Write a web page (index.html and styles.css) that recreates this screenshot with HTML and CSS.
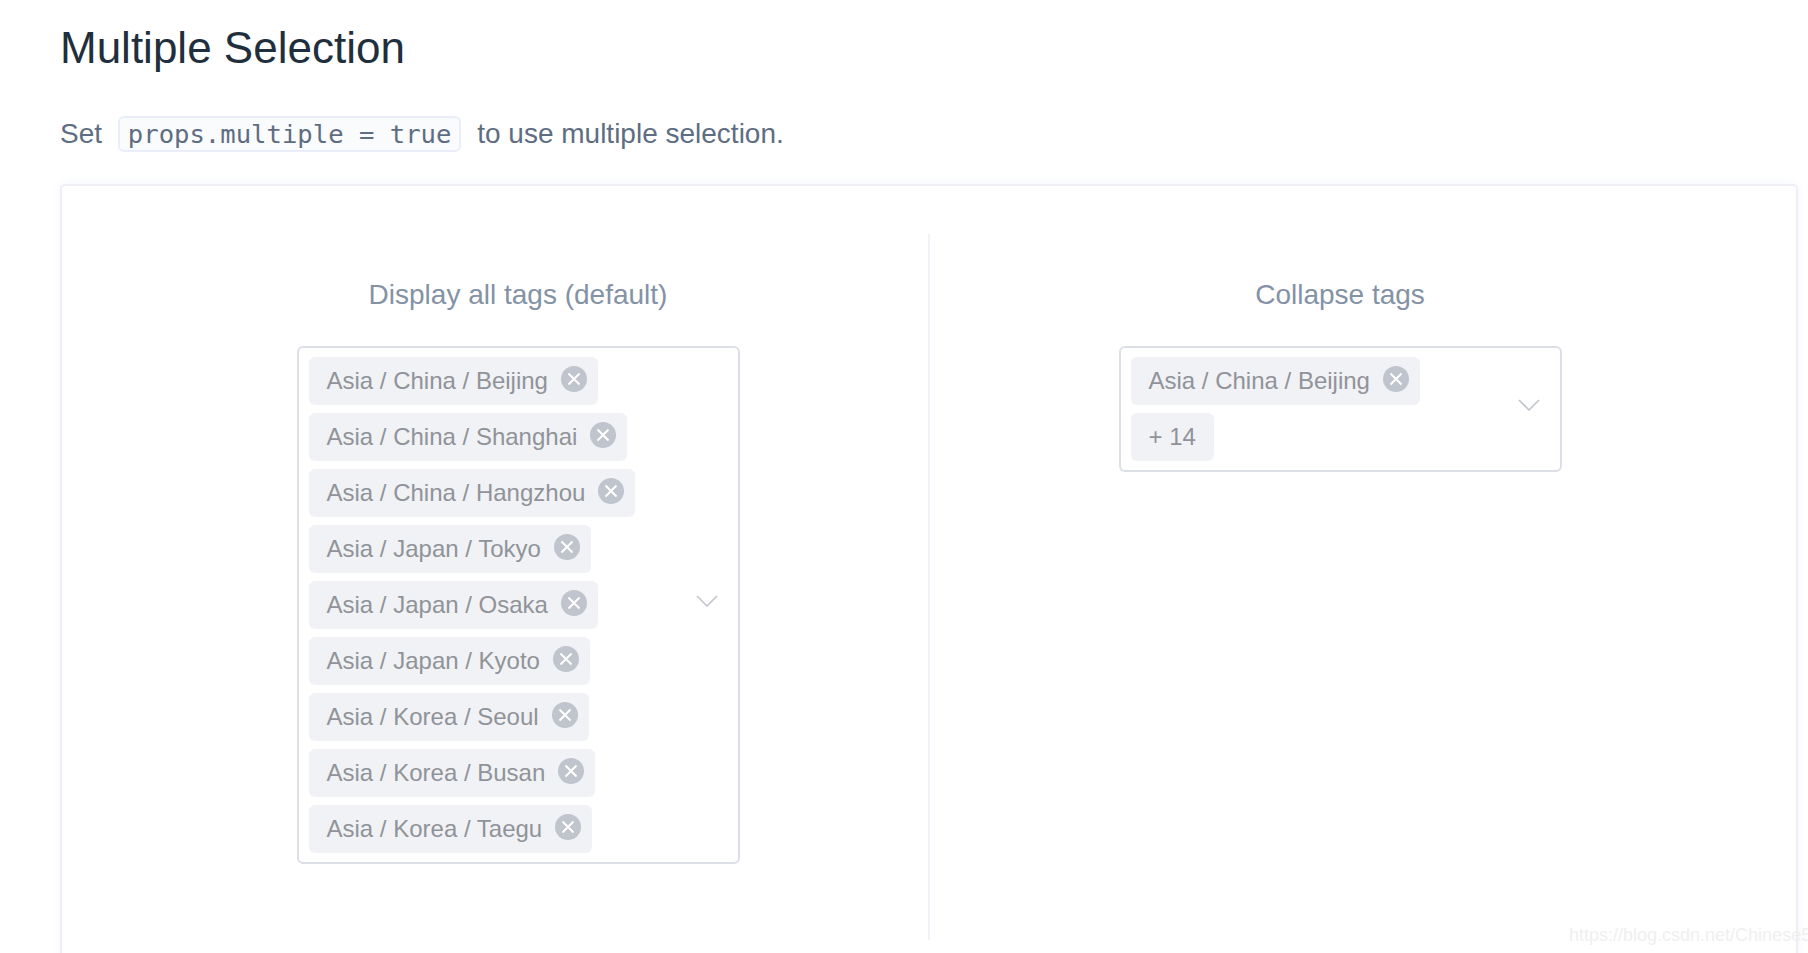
FILE: index.html
```html
<!DOCTYPE html>
<html lang="en">
<head>
<meta charset="utf-8">
<title>Multiple Selection</title>
<link rel="stylesheet" href="styles.css">
</head>
<body>
<main class="page">
  <h3 class="title">Multiple Selection</h3>
  <p class="intro">Set <code class="code">props.multiple = true</code> to use multiple selection.</p>
  <section class="card">
    <div class="demo demo-left">
      <span class="label">Display all tags (default)</span>
      <div class="select">
        <div class="tags">
          <span class="tag">Asia / China / Beijing<svg class="close" viewBox="0 0 26 26"><circle cx="13" cy="13" r="13"/><path d="M7.5 7.5l11 11M18.500 7.500l-11 11"/></svg></span>
          <span class="tag">Asia / China / Shanghai<svg class="close" viewBox="0 0 26 26"><circle cx="13" cy="13" r="13"/><path d="M7.500 7.500l11 11M18.500 7.500l-11 11"/></svg></span>
          <span class="tag">Asia / China / Hangzhou<svg class="close" viewBox="0 0 26 26"><circle cx="13" cy="13" r="13"/><path d="M7.500 7.500l11 11M18.500 7.500l-11 11"/></svg></span>
          <span class="tag">Asia / Japan / Tokyo<svg class="close" viewBox="0 0 26 26"><circle cx="13" cy="13" r="13"/><path d="M7.500 7.500l11 11M18.500 7.500l-11 11"/></svg></span>
          <span class="tag">Asia / Japan / Osaka<svg class="close" viewBox="0 0 26 26"><circle cx="13" cy="13" r="13"/><path d="M7.500 7.500l11 11M18.500 7.500l-11 11"/></svg></span>
          <span class="tag">Asia / Japan / Kyoto<svg class="close" viewBox="0 0 26 26"><circle cx="13" cy="13" r="13"/><path d="M7.500 7.500l11 11M18.500 7.500l-11 11"/></svg></span>
          <span class="tag">Asia / Korea / Seoul<svg class="close" viewBox="0 0 26 26"><circle cx="13" cy="13" r="13"/><path d="M7.500 7.500l11 11M18.500 7.500l-11 11"/></svg></span>
          <span class="tag">Asia / Korea / Busan<svg class="close" viewBox="0 0 26 26"><circle cx="13" cy="13" r="13"/><path d="M7.500 7.500l11 11M18.500 7.500l-11 11"/></svg></span>
          <span class="tag">Asia / Korea / Taegu<svg class="close" viewBox="0 0 26 26"><circle cx="13" cy="13" r="13"/><path d="M7.500 7.500l11 11M18.500 7.500l-11 11"/></svg></span>
        </div>
        <svg class="chevron" viewBox="0 0 22 12"><path d="M1 1l10 10L21 1"/></svg>
      </div>
    </div>
    <div class="demo">
      <span class="label">Collapse tags</span>
      <div class="select">
        <div class="tags">
          <span class="tag">Asia / China / Beijing<svg class="close" viewBox="0 0 26 26"><circle cx="13" cy="13" r="13"/><path d="M7.500 7.500l11 11M18.500 7.500l-11 11"/></svg></span>
          <span class="tag">+ 14</span>
        </div>
        <svg class="chevron" viewBox="0 0 22 12"><path d="M1 1l10 10L21 1"/></svg>
      </div>
    </div>
  </section>
  <span class="watermark">https://blog.csdn.net/Chinese521</span>
</main>
</body>
</html>
```
FILE: styles.css
```css
html, body {
  margin: 0;
  height: 953px;
  overflow: hidden;
  background: #fff;
}
.page {
  position: relative;
  height: 953px;
  padding: 0 10px 0 60px;
  box-sizing: border-box;
  font-family: "Liberation Sans", Arial, sans-serif;
}
.title {
  margin: 0;
  padding-top: 22px;
  font-size: 44px;
  line-height: 52px;
  font-weight: 400;
  color: #1f2f3d;
}
.intro {
  margin: 42px 0 0;
  height: 36px;
  display: flex;
  align-items: center;
  gap: 8px;
  font-size: 28px;
  color: #5e6d82;
  white-space: pre;
}
.code {
  box-sizing: border-box;
  height: 36px;
  padding: 0 8px;
  display: flex;
  align-items: center;
  font-family: "DejaVu Sans Mono", monospace;
  font-size: 25.6px;
  color: #5e6d82;
  background: #fafbfd;
  border: 2px solid #eaeefb;
  border-radius: 6px;
}
.card {
  box-sizing: border-box;
  margin-top: 32px;
  height: 806px;
  padding: 48px 46px;
  display: flex;
  align-items: stretch;
  border: 2px solid #ebebeb;
  border-color: #eeeff4;
  border-radius: 5px;
  box-shadow: 0 0 8px rgba(232, 237, 250, .5);
}
.demo {
  flex: 1 1 0;
  padding-top: 44px;
  display: flex;
  flex-direction: column;
  align-items: center;
}
.demo-left {
  border-right: 2px solid #eff2f6;
}
.label {
  height: 34px;
  line-height: 34px;
  font-size: 28px;
  color: #8492a6;
}
.select {
  box-sizing: border-box;
  width: 443px;
  margin-top: 34px;
  padding: 9px 20px 9px 10px;
  display: flex;
  justify-content: space-between;
  align-items: center;
  border: 2px solid #dcdfe6;
  border-radius: 6px;
}
.tags {
  display: flex;
  flex-direction: column;
  align-items: flex-start;
  gap: 8px;
}
.tag {
  box-sizing: border-box;
  height: 48px;
  padding: 0 18px;
  display: flex;
  align-items: center;
  font-size: 24px;
  color: #909399;
  background: #f0f2f5;
  border-radius: 6px;
  white-space: nowrap;
}
.tag .close {
  width: 26px;
  height: 26px;
  margin: -4px -7px 0 13px;
}
.close circle { fill: #c0c4cc; }
.close path { stroke: #fff; stroke-width: 2; fill: none; }
.chevron {
  width: 22px;
  height: 12px;
  margin-bottom: 8px;
  flex: none;
}
.chevron path { stroke: #c0c4cc; stroke-width: 1.6; fill: none; }
.watermark {
  position: absolute;
  left: 1569px;
  top: 924px;
  font-size: 18px;
  line-height: 22px;
  color: #efefef;
  white-space: nowrap;
}
```
